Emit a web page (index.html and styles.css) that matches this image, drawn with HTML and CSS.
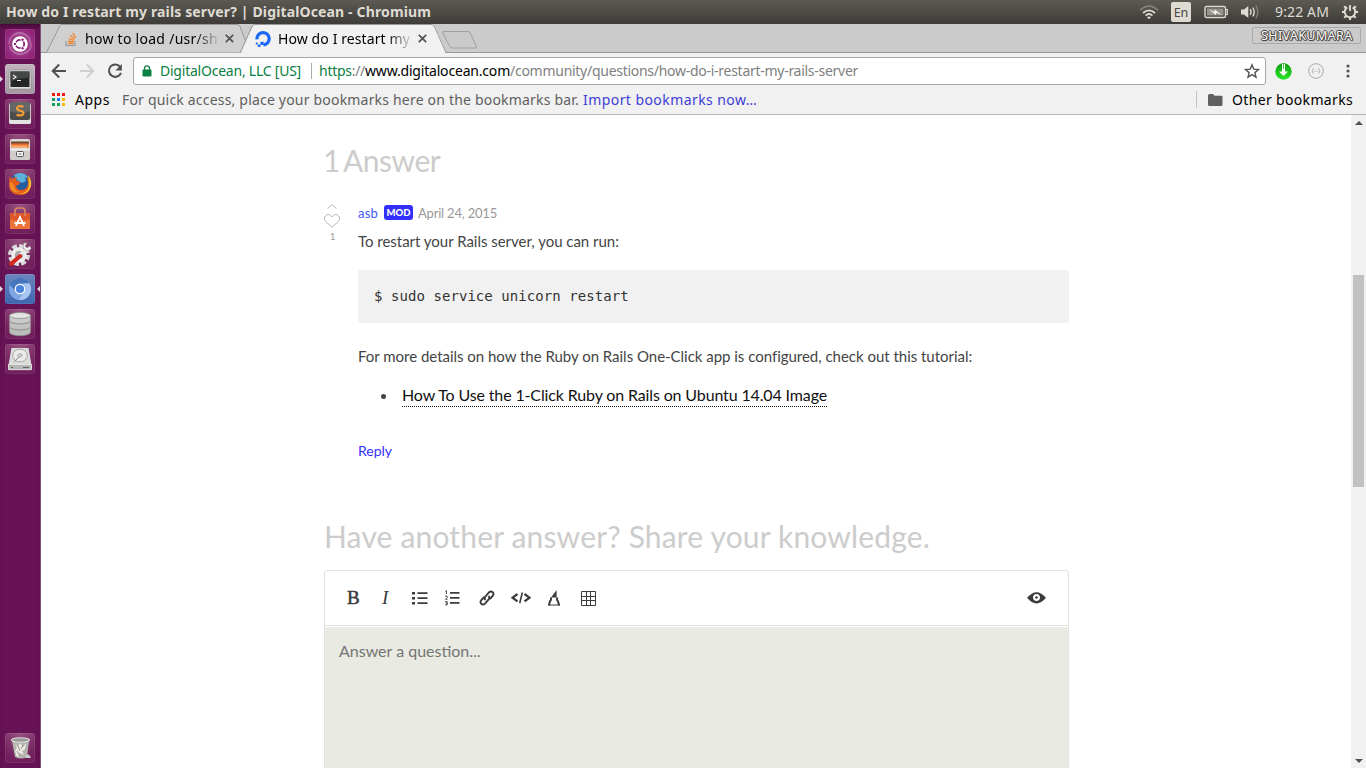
FILE: index.html
```html
<!DOCTYPE html>
<html lang="en">
<head>
<meta charset="utf-8">
<title>How do I restart my rails server? | DigitalOcean</title>
<link rel="stylesheet" href="styles.css">
</head>
<body>
<header class="panel">
  <span class="panel-title">How do I restart my rails server? | DigitalOcean - Chromium</span>
  <div class="indicators">
    <svg class="ind-wifi" width="20" height="16" viewBox="0 0 20 16" fill="none" stroke-width="1.7"><path d="M1 6.2Q10-2 19 6.2" stroke="#85827b"/><path d="M4 9Q10 3.6 16 9" stroke="#dfdbd2"/><path d="M6.6 11.6Q10 8.4 13.4 11.6" stroke="#dfdbd2"/><path d="M8 13.2L10 15.2 12 13.2Q10 11.8 8 13.2" fill="#dfdbd2"/></svg>
    <span class="ind-lang">En</span>
    <svg class="ind-batt" width="24" height="14" viewBox="0 0 24 14"><rect x="1" y="1.5" width="20.5" height="11" rx="1.5" fill="none" stroke="#dfdbd2" stroke-width="1.4"/><path d="M21.5 4.5h1.8v5h-1.8" fill="none" stroke="#dfdbd2" stroke-width="1.2"/><rect x="3" y="3.5" width="16.5" height="7" fill="#96938b"/><path d="M4.500 4l6 3V4.300l7.500 6-6-2.600v2.600z" fill="#f3f0e8"/></svg>
    <svg class="ind-vol" width="20" height="16" viewBox="0 0 20 16" fill="none" stroke-width="1.4"><path d="M1 5.5h3L8.3 2v12L4 10.5H1z" fill="#dfdbd2"/><path d="M10.2 5.2q1.7 2.8 0 5.6M12.8 3.5q2.8 4.5 0 9" stroke="#dfdbd2"/><path d="M15.8 1.5q4 6.500 0 13" stroke="#85827b"/></svg>
    <span class="ind-time">9:22 AM</span>
    <svg class="ind-gear" width="18" height="18" viewBox="0 0 18 18" fill="none" stroke="#dfdbd2"><path d="M6.300 4.300A5.300 5.300 0 1 0 11.700 4.300" stroke-width="2"/><path d="M9 2V8" stroke-width="1.900"/><path d="M14 9h3M4 9H1M9 14v3M12.500 12.500l2.200 2.200M5.500 12.500l-2.200 2.200M13 5l1.800-1.800M5 5L3.200 3.200" stroke-width="2.200"/></svg>
  </div>
</header>
<div class="desktop">
  <nav class="launcher">
    <div class="tile tile-dash"><svg viewBox="0 0 30 30"><g fill="none" stroke="#fff" opacity=".25" stroke-width="1.500"><path d="M4 15C4 5 16 1 23 8M26 14c1 10-11 14-18 8M8 6c6-5 17-2 17 8M5 17c1 8 12 11 17 5"/></g><circle cx="15" cy="15" r="7.800" fill="#fff"/><circle cx="15" cy="15" r="4.200" fill="none" stroke="#842070" stroke-width="1.800"/><g stroke="#fff" stroke-width="1"><circle cx="10" cy="15" r="1.700" fill="#842070"/><circle cx="17.600" cy="10.700" r="1.700" fill="#842070"/><circle cx="17.600" cy="19.300" r="1.700" fill="#842070"/></g></svg></div>
    <div class="tile tile-term running"><svg viewBox="0 0 30 30"><rect x="4" y="6" width="22" height="19" rx="1" fill="#dedede" stroke="#777" stroke-width=".5"/><rect x="5.500" y="7.500" width="19" height="15.500" fill="#242626"/><path d="M5.500 7.500h19v6q-8 0-19 4z" fill="#454745"/><path d="M8 11l3 2-3 2M12 16.500h4" fill="none" stroke="#eee" stroke-width="1.200"/></svg></div>
    <div class="tile"><svg viewBox="0 0 30 30"><rect x="4" y="4" width="22" height="21" rx="2" fill="#c9c9c9"/><rect x="5" y="3" width="20" height="18" rx="2" fill="#4b4b4b"/><path d="M5 5q0-2 2-2h16q2 0 2 2v7q-10 4-20 0z" fill="#666"/><path d="M4 21h22v2q0 2-2 2H6q-2 0-2-2z" fill="#e4e4e4"/><path d="M18.500 7.600Q12 6 12 9.500c0 3 6.500 1.500 6.500 4.500 0 3-4 2.600-7 1.900" fill="none" stroke="#f49b32" stroke-width="2.200"/></svg></div>
    <div class="tile"><svg viewBox="0 0 30 30"><path d="M5 7q0-2 2-2h16q2 0 2 2v9H5z" fill="#ddd8d3"/><path d="M6 7.500h18v3H6z" fill="#6e4535"/><path d="M6.500 9.500h17v5h-17z" fill="#e9702d"/><path d="M7 11.500h15v4H7z" fill="#f6ad77"/><rect x="5" y="14" width="20" height="12" rx="1.500" fill="#cfccc9"/><rect x="5.500" y="14.500" width="19" height="2" fill="#eee"/><rect x="11.500" y="17.500" width="7" height="5" rx="1" fill="#f7f7f7" stroke="#555"/><path d="M13.500 20h3" stroke="#666"/></svg></div>
    <div class="tile"><svg viewBox="0 0 30 30"><circle cx="15.500" cy="14.500" r="10.500" fill="#235da4"/><path d="M9 6q8-5 14 2l-3 1 1 3-4 2-5-3z" fill="#5db3dd"/><path d="M4.500 7.500L7 10q2-2 5-2l-1 3q2 1 4 2l-1 3q-2 0-3 1 1 4 5 4 7 0 7-8 0-3-2-5 6 2 5 9-2 9-10.500 9Q5 26 4 17z" fill="#e55b1e"/><path d="M23 6q4 5 3 11-3 9-11 8 9-2 9-10 0-3-1-9z" fill="#fbc42c"/><path d="M5 13q3 0 4 4 1 5 7 6-9 2-11-5z" fill="#f08a25"/></svg></div>
    <div class="tile"><svg viewBox="0 0 30 30"><path d="M5 9h20v16H5z" fill="#eb7338"/><path d="M5 9h20v7H5z" fill="#df562b"/><path d="M10 12V7q0-3 3-3h4q3 0 3 3v5" fill="none" stroke="#d88863" stroke-width="1.700"/><path d="M11 22l4-9 4 9M9.500 19h11" fill="none" stroke="#fff" stroke-width="1.800"/></svg></div>
    <div class="tile"><svg viewBox="0 0 30 30"><circle cx="14" cy="16" r="9" fill="none" stroke="#dadada" stroke-width="4" stroke-dasharray="4.700 2.370"/><circle cx="14" cy="16" r="6" fill="#a9a4a7" stroke="#eee" stroke-width="3.500"/><path d="M11 20l10-10" stroke="#e6e6e6" stroke-width="3"/><path d="M19 4q-2 4 1 7 3 2 6-1l-1-3-3 2-2-2 2-3z" fill="#f4f4f4" stroke="#999" stroke-width=".6"/><path d="M6 25l9-8" stroke="#d5261e" stroke-width="4" stroke-linecap="round"/></svg></div>
    <div class="tile tile-chromium running active"><svg viewBox="0 0 30 30"><circle cx="15" cy="15" r="11" fill="#7ea7e4"/><path d="M4.800 11A11 11 0 0 1 24.500 9.500H15a5.500 5.500 0 0 0-5.300 6.800z" fill="#4576bd"/><path d="M24.500 9.500A11 11 0 0 1 14 26l5.500-8.500q2.500-4-1.500-8z" fill="#a8c6ef"/><circle cx="15" cy="15" r="5.300" fill="#fff"/><circle cx="15" cy="15" r="4.100" fill="#4a83db"/></svg></div>
    <div class="tile"><svg viewBox="0 0 30 30" stroke="#888" stroke-width=".7"><path d="M4.500 18v5c0 5 21 5 21 0v-5" fill="#bdbdbd"/><ellipse cx="15" cy="18" rx="10.500" ry="3" fill="#eee"/><path d="M4.500 12v5c0 5 21 5 21 0v-5" fill="#c2c2c2"/><ellipse cx="15" cy="12" rx="10.500" ry="3" fill="#eee"/><path d="M4.500 6.500V11c0 5 21 5 21 0V6.500" fill="#c9c9c9"/><ellipse cx="15" cy="6.500" rx="10.500" ry="3" fill="#e4e4e4"/></svg></div>
    <div class="tile"><svg viewBox="0 0 30 30"><path d="M6.500 4h17l3 17v4.500h-23V21z" fill="#dcdcda"/><path d="M3.500 20.500h23v5.200h-23z" fill="#b5b5b3" stroke="#eee" stroke-width=".8"/><ellipse cx="15" cy="11.500" rx="7.300" ry="6.300" fill="#ececec" stroke="#aaa"/><ellipse cx="15" cy="11.500" rx="2.300" ry="1.800" fill="#ccc" stroke="#999" stroke-width=".6"/><path d="M9 18l5-5" stroke="#888"/><path d="M18 23.500h6M6 23.500h2" stroke="#666"/></svg></div>
    <div class="tile tile-trash"><svg viewBox="0 0 30 30"><path d="M7 8h17l-2 16q-6 3-12 0z" fill="#b5b3ae"/><path d="M10 11l3 3 2-4 3 4 3-4-1 6-3 2 2 4-4-2-3 4-2-6 2-3zM11 21l3-2 1 5z" fill="#eeede8"/><path d="M13 13l2 5M18 12l-2 4M12 18l3 5" stroke="#77756f" stroke-width=".8"/><ellipse cx="15.500" cy="7" rx="9.300" ry="2.200" fill="#999" stroke="#e3e3e3"/><path d="M20 23l3-2 3 3-1 1h-4z" fill="#ccc"/></svg></div>
  </nav>
  <main class="browser">
    <div class="tabstrip">
      <svg class="tab-shapes" width="450" height="29" viewBox="0 0 450 29"><path d="M0 28.500H5.500L19 1.500Q19.300 .5 21 .5H196q2 0 3 2L209 28.500" fill="#d0d0d0" stroke="#999"/><path d="M402 9.500q-.8-2 1-2h24q1.500 0 2.300 1.500l6 13q.7 2-1 2H411.500q-2 0-2.700-1.500z" fill="#cacaca" stroke="#a0a0a0"/><path d="M199 29L211 2.500q1-2 3-2H390q2 0 3 2L405 28.500H450" fill="none" stroke="#999"/><path d="M200 29L211.500 3q1-2 3-2H390q2 0 3 2L404.500 29z" fill="#f1f1f1"/></svg>
      <div class="tab tab-back">
        <svg class="tab-icon" width="16" height="16" viewBox="0 0 16 16" fill="none"><path d="M3 10v4.500h9V10" stroke="#999" stroke-width="1.200"/><path d="M5 12.500h5.500M5 10.200l5.600.8M5.600 7.500l5.300 1.900M7.200 4.600l4.500 3.300M9.700 2l3.100 4.600" stroke="#f48024" stroke-width="1.300"/></svg>
        <span class="tab-text">how to load /usr/sh</span>
        <svg class="tab-close" width="9" height="9" viewBox="0 0 9 9"><path d="M.8.8l7.400 7.400M8.200.8L.8 8.200" stroke="#555" stroke-width="1.800"/></svg>
      </div>
      <div class="tab tab-front">
        <svg class="tab-icon" width="16" height="16" viewBox="0 0 16 16"><path d="M2 8.300A6.100 6.100 0 1 1 8.500 13.800" fill="none" stroke="#1c68f5" stroke-width="3.200"/><path d="M5.400 10.700h3.300v3.200H5.400zM2.800 13.500h2.600V16H2.800zM.8 11.500h2v2h-2z" fill="#1c68f5"/></svg>
        <span class="tab-text">How do I restart my</span>
        <svg class="tab-close" width="9" height="9" viewBox="0 0 9 9"><path d="M.8.8l7.400 7.400M8.200.8L.8 8.200" stroke="#555" stroke-width="1.800"/></svg>
      </div>
      <span class="profile">SHIVAKUMARA</span>
    </div>
    <div class="toolbar">
      <svg class="nav-btn" width="16" height="16" viewBox="0 0 16 16" fill="none" stroke="#505050" stroke-width="2"><path d="M15 8H2M8.200 1.500L1.700 8l6.500 6.500"/></svg>
      <svg class="nav-btn" width="16" height="16" viewBox="0 0 16 16" fill="none" stroke="#d0d0d0" stroke-width="2"><path d="M1 8h13M7.800 1.500L14.300 8l-6.500 6.500"/></svg>
      <svg class="nav-btn" width="16" height="16" viewBox="0 0 16 16"><path d="M13.200 4A6.200 6.200 0 1 0 14 9.800" fill="none" stroke="#505050" stroke-width="2"/><path d="M14.900 1v6.500H8.400z" fill="#505050"/></svg>
      <div class="omnibox">
        <svg class="lock" width="10" height="12" viewBox="0 0 10 12"><rect x=".5" y="4.500" width="9" height="7" rx="1" fill="#0b8043"/><path d="M2.500 5V3.300a2.500 2.500 0 0 1 5 0V5" fill="none" stroke="#0b8043" stroke-width="1.300"/></svg>
        <span class="owner">DigitalOcean, LLC [US]</span>
        <span class="divider"></span>
        <span class="url"><span class="scheme">https</span>://<span class="host">www.digitalocean.com</span>/community/questions/how-do-i-restart-my-rails-server</span>
        <svg class="star" width="16" height="16" viewBox="0 0 16 16"><path d="M8 1.800l1.800 4.300 4.700.4-3.600 3.100 1.100 4.600L8 11.700l-4 2.500 1.100-4.600L1.500 6.500l4.700-.4z" fill="none" stroke="#555" stroke-width="1.400"/></svg>
      </div>
      <svg class="ext-down" width="17" height="17" viewBox="0 0 17 17"><defs><linearGradient id="grn" x2="0" y2="1"><stop offset="0" stop-color="#159c15"/><stop offset="1" stop-color="#27e827"/></linearGradient></defs><circle cx="8.500" cy="8.500" r="8.200" fill="url(#grn)"/><path d="M7 1h3v7.500h3L8.500 13 4 8.500h3z" fill="#fff"/><path d="M8.500 0v6" stroke="#18b018" stroke-width=".8"/></svg>
      <svg class="ext-braces" width="16" height="16" viewBox="0 0 16 16" fill="none" stroke="#aaa"><circle cx="8" cy="8" r="7.300"/><path d="M5.800 5.500q-1.200 0-1 1.200 0 1.300-1 1.300 1 0 1 1.300-.2 1.200 1 1.200M10.200 5.500q1.200 0 1 1.200 0 1.300 1 1.300-1 0-1 1.300.2 1.200-1 1.200" stroke-width=".9"/><path d="M6.500 8.500h.8M7.700 8.500h.8M8.900 8.500h.8" stroke-width=".8"/></svg>
      <svg class="menu" width="4" height="14" viewBox="0 0 4 14" fill="#555"><circle cx="2" cy="2" r="1.600"/><circle cx="2" cy="7" r="1.600"/><circle cx="2" cy="12" r="1.600"/></svg>
    </div>
    <div class="bookmarks">
      <svg class="apps-icon" width="13" height="13" viewBox="0 0 13 13"><path d="M0 0h3v3H0zM5 0h3v3H5zM10 0h3v3h-3z" fill="#eb1c0c"/><path d="M0 5h3v3H0zM0 10h3v3H0zM5 10h3v3H5z" fill="#12a05b"/><path d="M5 5h3v3H5z" fill="#1a7ff5"/><path d="M10 5h3v3h-3zM10 10h3v3h-3z" fill="#fbb805"/></svg>
      <span class="apps">Apps</span>
      <span class="hint">For quick access, place your bookmarks here on the bookmarks bar.</span>
      <span class="import">Import bookmarks now…</span>
      <div class="other">
        <svg width="15" height="12" viewBox="0 0 15 12"><path d="M0 1.500Q0 0 1.500 0H5l1.700 1.700h6.500q1.300 0 1.300 1.300v7.500q0 1.500-1.500 1.500h-11.500Q0 12 0 10.500z" fill="#606060"/></svg>
        <span class="other-text">Other bookmarks</span>
      </div>
    </div>
    <div class="viewport">
      <article class="page">
        <h2 class="heading first">1 Answer</h2>
        <section class="answer">
          <div class="vote">
            <svg width="10" height="5" viewBox="0 0 10 5"><path d="M.5 4.700L5 .7l4.500 4" fill="none" stroke="#aaa" stroke-width=".9"/></svg>
            <svg class="heart" width="16" height="14" viewBox="0 0 16 14"><path d="M8 13.300L1.700 7.400C-1 4.300 1.300.6 4.200.6 6 .6 7.300 1.700 8 3 8.700 1.700 10 .6 11.800.6c2.900 0 5.200 3.700 2.500 6.800z" fill="none" stroke="#aaa" stroke-width=".9"/></svg>
            <span class="votes">1</span>
          </div>
          <div class="answer-body">
            <div class="meta"><a class="author">asb</a><span class="mod">MOD</span><span class="date">April 24, 2015</span></div>
            <p class="para intro">To restart your Rails server, you can run:</p>
            <pre class="code">$ sudo service unicorn restart</pre>
            <p class="para">For more details on how the Ruby on Rails One-Click app is configured, check out this tutorial:</p>
            <div class="list"><span class="dot"></span><a class="tutorial">How To Use the 1-Click Ruby on Rails on Ubuntu 14.04 Image</a></div>
            <a class="reply">Reply</a>
          </div>
        </section>
        <h2 class="heading second">Have another answer? Share your knowledge.</h2>
        <section class="editor">
          <div class="tools">
            <span class="bold">B</span><span class="italic">I</span>
            <svg class="t-ul" width="16" height="14" viewBox="0 0 16 14" fill="#3c3c3c"><path d="M0 1h3v2.500H0zM0 6h3v2.500H0zM0 11h3v2.500H0zM5.500 1.300H15.500v1.700H5.500zM5.500 6.300H15.500V8H5.500zM5.500 11.300H15.500V13H5.500z"/></svg>
            <svg class="t-ol" width="15" height="16" viewBox="0 0 15 16"><path d="M5 2.900h9.500M5 7.900h9.500M5 12.900h9.500" stroke="#3c3c3c" stroke-width="1.700"/><path d="M.3 1.200L1.500.6V4M.2 6.200h2v1.300L.5 9.300h2M.2 11.600h2v1.600H.8h1.400V15H.2" stroke="#3c3c3c" fill="none" stroke-width=".9"/></svg>
            <svg class="t-link" width="16" height="16" viewBox="0 0 16 16" fill="none" stroke="#3c3c3c" stroke-width="1.900"><path d="M6.500 10q-1.700-1.800 0-3.700l3.500-4q1.900-1.700 3.700-.1 1.600 1.800 0 3.600L10.800 9"/><path d="M9.500 6q1.700 1.800 0 3.700l-3.500 4q-1.900 1.700-3.700.1-1.600-1.800 0-3.600L5.200 7"/></svg>
            <svg class="t-code" width="20" height="12" viewBox="0 0 20 12" fill="none" stroke="#3c3c3c"><path d="M6.500 2L1.500 5.700l5 3.700M13.500 2l5 3.700-5 3.700" stroke-width="2.200"/><path d="M11.300 .5L8.700 11.300" stroke-width="1.600"/></svg>
            <svg class="t-mark" width="12" height="16" viewBox="0 0 12 16"><path d="M3 7.500L8.600 0v7.500z" fill="#3c3c3c"/><path d="M3 7v2.300L1.800 11.500.8 15h10.400l-1-3.500L9 9.300V7" fill="none" stroke="#3c3c3c" stroke-width="1.100"/><path d="M3 8v1.800L2 11.500.8 15.500M9 8v1.800l1 1.700 1.200 4" fill="none" stroke="#3c3c3c" stroke-width="1.900"/></svg>
            <svg class="t-grid" width="15" height="15" viewBox="0 0 15 15"><path d="M.5.500h14v14H.5zM5.500.5v14M9.500.5v14M.5 5.500h14M.5 9.500h14" fill="none" stroke="#3c3c3c"/></svg>
            <svg class="t-eye" width="19" height="12" viewBox="0 0 19 12"><path d="M0 5.800Q9.500-5.500 19 5.800 9.500 17 0 5.800z" fill="#3c3c3c"/><circle cx="9.500" cy="5.500" r="3.200" fill="#fff"/><circle cx="9.500" cy="5.500" r="2.400" fill="none" stroke="#fff" stroke-width="1.600"/><circle cx="9.500" cy="5.500" r="1.300" fill="#3c3c3c"/></svg>
          </div>
          <div class="input">Answer a question...</div>
        </section>
      </article>
      <div class="scrollbar"><span class="arrow-up"></span><span class="thumb"></span><span class="arrow-down"></span></div>
    </div>
  </main>
</div>
</body>
</html>
```
FILE: styles.css
```css
* { box-sizing: border-box; }
body { margin: 0; width: 1366px; height: 768px; overflow: hidden; background: #fff; font-family: "Noto Sans", sans-serif; display: flex; flex-direction: column; }
svg { display: block; flex: none; }
span, a, p, h2 { white-space: nowrap; }
h2, p, pre { margin: 0; }

.panel { flex: none; height: 24px; background: linear-gradient(#5c5a53, #3d3c38); color: #dfdbd2; display: flex; justify-content: space-between; align-items: center; padding-left: 6px; }
.panel-title { font-weight: 700; font-size: 14px; line-height: 24px; letter-spacing: .137px; }
.indicators { display: flex; align-items: center; width: 227px; }
.ind-lang { width: 20px; height: 20px; margin-left: 12px; background: #dfdbd2; color: #4a4843; border-radius: 2px; font-size: 12.500px; line-height: 21px; text-align: center; }
.ind-batt { margin-left: 13px; }
.ind-vol { margin-left: 12px; }
.ind-time { margin-left: 15px; width: 54px; font-size: 14px; line-height: 24px; letter-spacing: .13px; }
.ind-gear { margin-left: 12px; }

.desktop { flex: 1; display: flex; min-height: 0; }
.launcher { flex: none; width: 41px; background: #671254; border-right: 1px solid #835078; padding: 5px 0 5px 5px; display: flex; flex-direction: column; gap: 5px; box-shadow: inset 0 5px 5px -3px rgba(30, 0, 20, .6); }
.tile { position: relative; flex: none; width: 30px; height: 30px; border-radius: 3px; background: radial-gradient(circle at 50% 0, #96527f, #752560 65%, #6d1b5a); box-shadow: inset 0 0 0 1px rgba(255, 255, 255, .08); }
.tile svg { width: 30px; height: 30px; }
.tile-dash { background: radial-gradient(circle, #ad5f9b, #92237a 75%); }
.tile-term { background: linear-gradient(#c1b4be, #a698a3); }
.tile-chromium { background: linear-gradient(#6d84bd, #3e66ae); }
.tile-trash { margin-top: auto; }
.running::before, .active::after { content: ""; position: absolute; top: 12px; border: 3px solid transparent; }
.running::before { left: -5px; border-left-color: #e1d5de; border-right: 0; }
.active::after { right: -5px; border-right-color: #e1d5de; border-left: 0; }

.browser { flex: 1; display: flex; flex-direction: column; min-width: 0; background: #f1f1f1; }
.tabstrip { position: relative; flex: none; height: 29px; background: #cbcbcb; box-shadow: inset 0 -1px #999; display: flex; align-items: center; font-size: 14px; }
.tab-shapes { position: absolute; left: 0; top: 0; }
.tab { position: relative; display: flex; align-items: center; height: 29px; }
.tab-back { padding-left: 22px; width: 214px; letter-spacing: .276px; }
.tab-front { width: 176px; letter-spacing: .1px; }
.tab-icon { margin-right: 6px; }
.tab-front .tab-icon { margin-right: 7px; }
.tab-text { width: 133px; overflow: hidden; -webkit-mask-image: linear-gradient(90deg, #000 82%, rgba(0, 0, 0, .1)); mask-image: linear-gradient(90deg, #000 82%, rgba(0, 0, 0, .1)); }
.tab-close { margin-left: 7px; }
.profile { position: absolute; left: 1211px; top: 3px; width: 109px; height: 17px; border: 1px solid #aaa; border-radius: 2px; padding-left: 8px; font-size: 12.500px; letter-spacing: .38px; line-height: 16px; color: #fff; text-shadow: 1px 0 #444, -1px 0 #444, 0 1px #444, 0 -1px #444, 1px 1px 1px #444; }

.toolbar { flex: none; height: 36px; display: flex; align-items: center; padding-left: 10px; }
.nav-btn { margin-right: 12px; }
.nav-btn:nth-child(3) { margin-right: 10px; }
.omnibox { width: 1133px; height: 28px; background: #fff; border: 1px solid #a6a6a6; border-radius: 3px; display: flex; align-items: center; padding-left: 8px; font-size: 14px; line-height: 26px; }
.owner { color: #0b8043; width: 141px; margin-left: 8px; letter-spacing: -.229px; }
.divider { width: 1px; height: 16px; background: #aaa; margin: 0 7px 0 10px; }
.url { color: #808080; letter-spacing: -.275px; }
.scheme { color: #0b8043; }
.host { color: #000; letter-spacing: -.19px; }
.star { margin: 0 5px 0 auto; }
.ext-down { margin-left: 9px; }
.ext-braces { margin-left: 16px; }
.menu { margin-left: 22px; }

.bookmarks { flex: none; height: 26px; border-bottom: 1px solid #b6b6b6; display: flex; align-items: center; padding: 0 14px 4px 11px; font-size: 14px; line-height: 22px; }
.apps { width: 35px; margin: 0 12px 0 10px; letter-spacing: .53px; }
.hint { width: 457px; margin-right: 4px; color: #606060; letter-spacing: .194px; }
.import { color: #4040d8; letter-spacing: .43px; }
.other { margin-left: auto; display: flex; align-items: center; gap: 9px; height: 17px; padding-left: 11px; border-left: 1px solid #c4c4c4; }
.other-text { width: 120px; letter-spacing: .34px; }

.viewport { flex: 1; display: flex; min-height: 0; background: #fff; }
.page { flex: 1; padding: 25px 0 0 283px; font-family: Lato, sans-serif; color: #444; overflow: hidden; }
.heading { height: 40px; line-height: 40px; font-size: 30px; font-weight: 400; color: #ccc; }
.heading.first { margin-left: -1px; letter-spacing: -.5px; word-spacing: -3px; }
.heading.second { margin-top: 55px; letter-spacing: .166px; }
.answer { display: flex; margin-top: 22px; }
.vote { flex: none; width: 16px; margin-right: 18px; padding-top: 2px; display: flex; flex-direction: column; align-items: center; }
.heart { margin-top: 5px; }
.votes { font-size: 9px; line-height: 12px; color: #999; margin: 3px 0 0 1px; }
.answer-body { width: 711px; }
.meta { display: flex; align-items: center; height: 21px; font-size: 13px; color: #999; }
.author { width: 20px; color: #3c5bff; letter-spacing: .2px; }
.mod { width: 29px; height: 15px; margin: 0 5px 0 6px; background: #332fff; color: #fff; border-radius: 3px; font-size: 9.500px; font-weight: 900; line-height: 15px; text-align: center; }
.date { letter-spacing: -.203px; }
.para { height: 20px; line-height: 20px; font-size: 15px; letter-spacing: -.019px; }
.para.intro { margin-top: 8px; }
.code { height: 53px; margin: 19px 0 23px; padding-left: 16px; background: #f1f1f1; border-radius: 2px; font: 14px/53px "DejaVu Sans Mono", monospace; letter-spacing: .06px; color: #333; }
.list { display: flex; align-items: center; height: 22px; margin-top: 19px; padding-left: 23px; }
.dot { width: 5px; height: 5px; border-radius: 50%; background: #444; margin-right: 16px; }
.tutorial { width: 425px; height: 22px; line-height: 20px; font-size: 16px; letter-spacing: -.139px; color: #111; border-bottom: 1px dotted #111; }
.reply { display: block; width: 34px; margin-top: 34px; height: 20px; line-height: 20px; font-size: 14px; color: #332fff; }
.editor { width: 745px; height: 240px; margin-top: 14px; border: 1px solid #e1e1e1; border-radius: 3px; }
.tools { height: 55px; border-bottom: 1px solid #e1e1e1; display: flex; align-items: center; padding: 0 22px; color: #3c3c3c; }
.bold, .italic { font: 400 19px/20px "Liberation Serif", serif; width: 12px; }
.bold { -webkit-text-stroke: .5px #3c3c3c; }
.italic { font-style: italic; margin-left: 23px; }
.t-ul { margin-left: 18px; }
.t-ol { margin-left: 17px; }
.t-link { margin-left: 19px; }
.t-code { margin-left: 16px; }
.t-mark { margin-left: 17px; }
.t-grid { margin-left: 21px; }
.t-eye { margin-left: auto; }
.input { height: 183px; margin-top: 1px; background: #e9eae2; padding: 14px 14px; font-size: 16px; line-height: 20px; color: #757575; border-radius: 2px 2px 0 0; }

.scrollbar { flex: none; width: 15px; background: #f1f1f1; display: flex; flex-direction: column; align-items: center; padding: 6px 0 5px; }
.thumb { width: 11px; height: 212px; margin-top: 150px; background: #c1c1c1; }
.arrow-up, .arrow-down { border: 4px solid transparent; }
.arrow-up { border-bottom-color: #505050; border-top: 0; }
.arrow-down { border-top-color: #505050; border-bottom: 0; margin-top: auto; }
```
